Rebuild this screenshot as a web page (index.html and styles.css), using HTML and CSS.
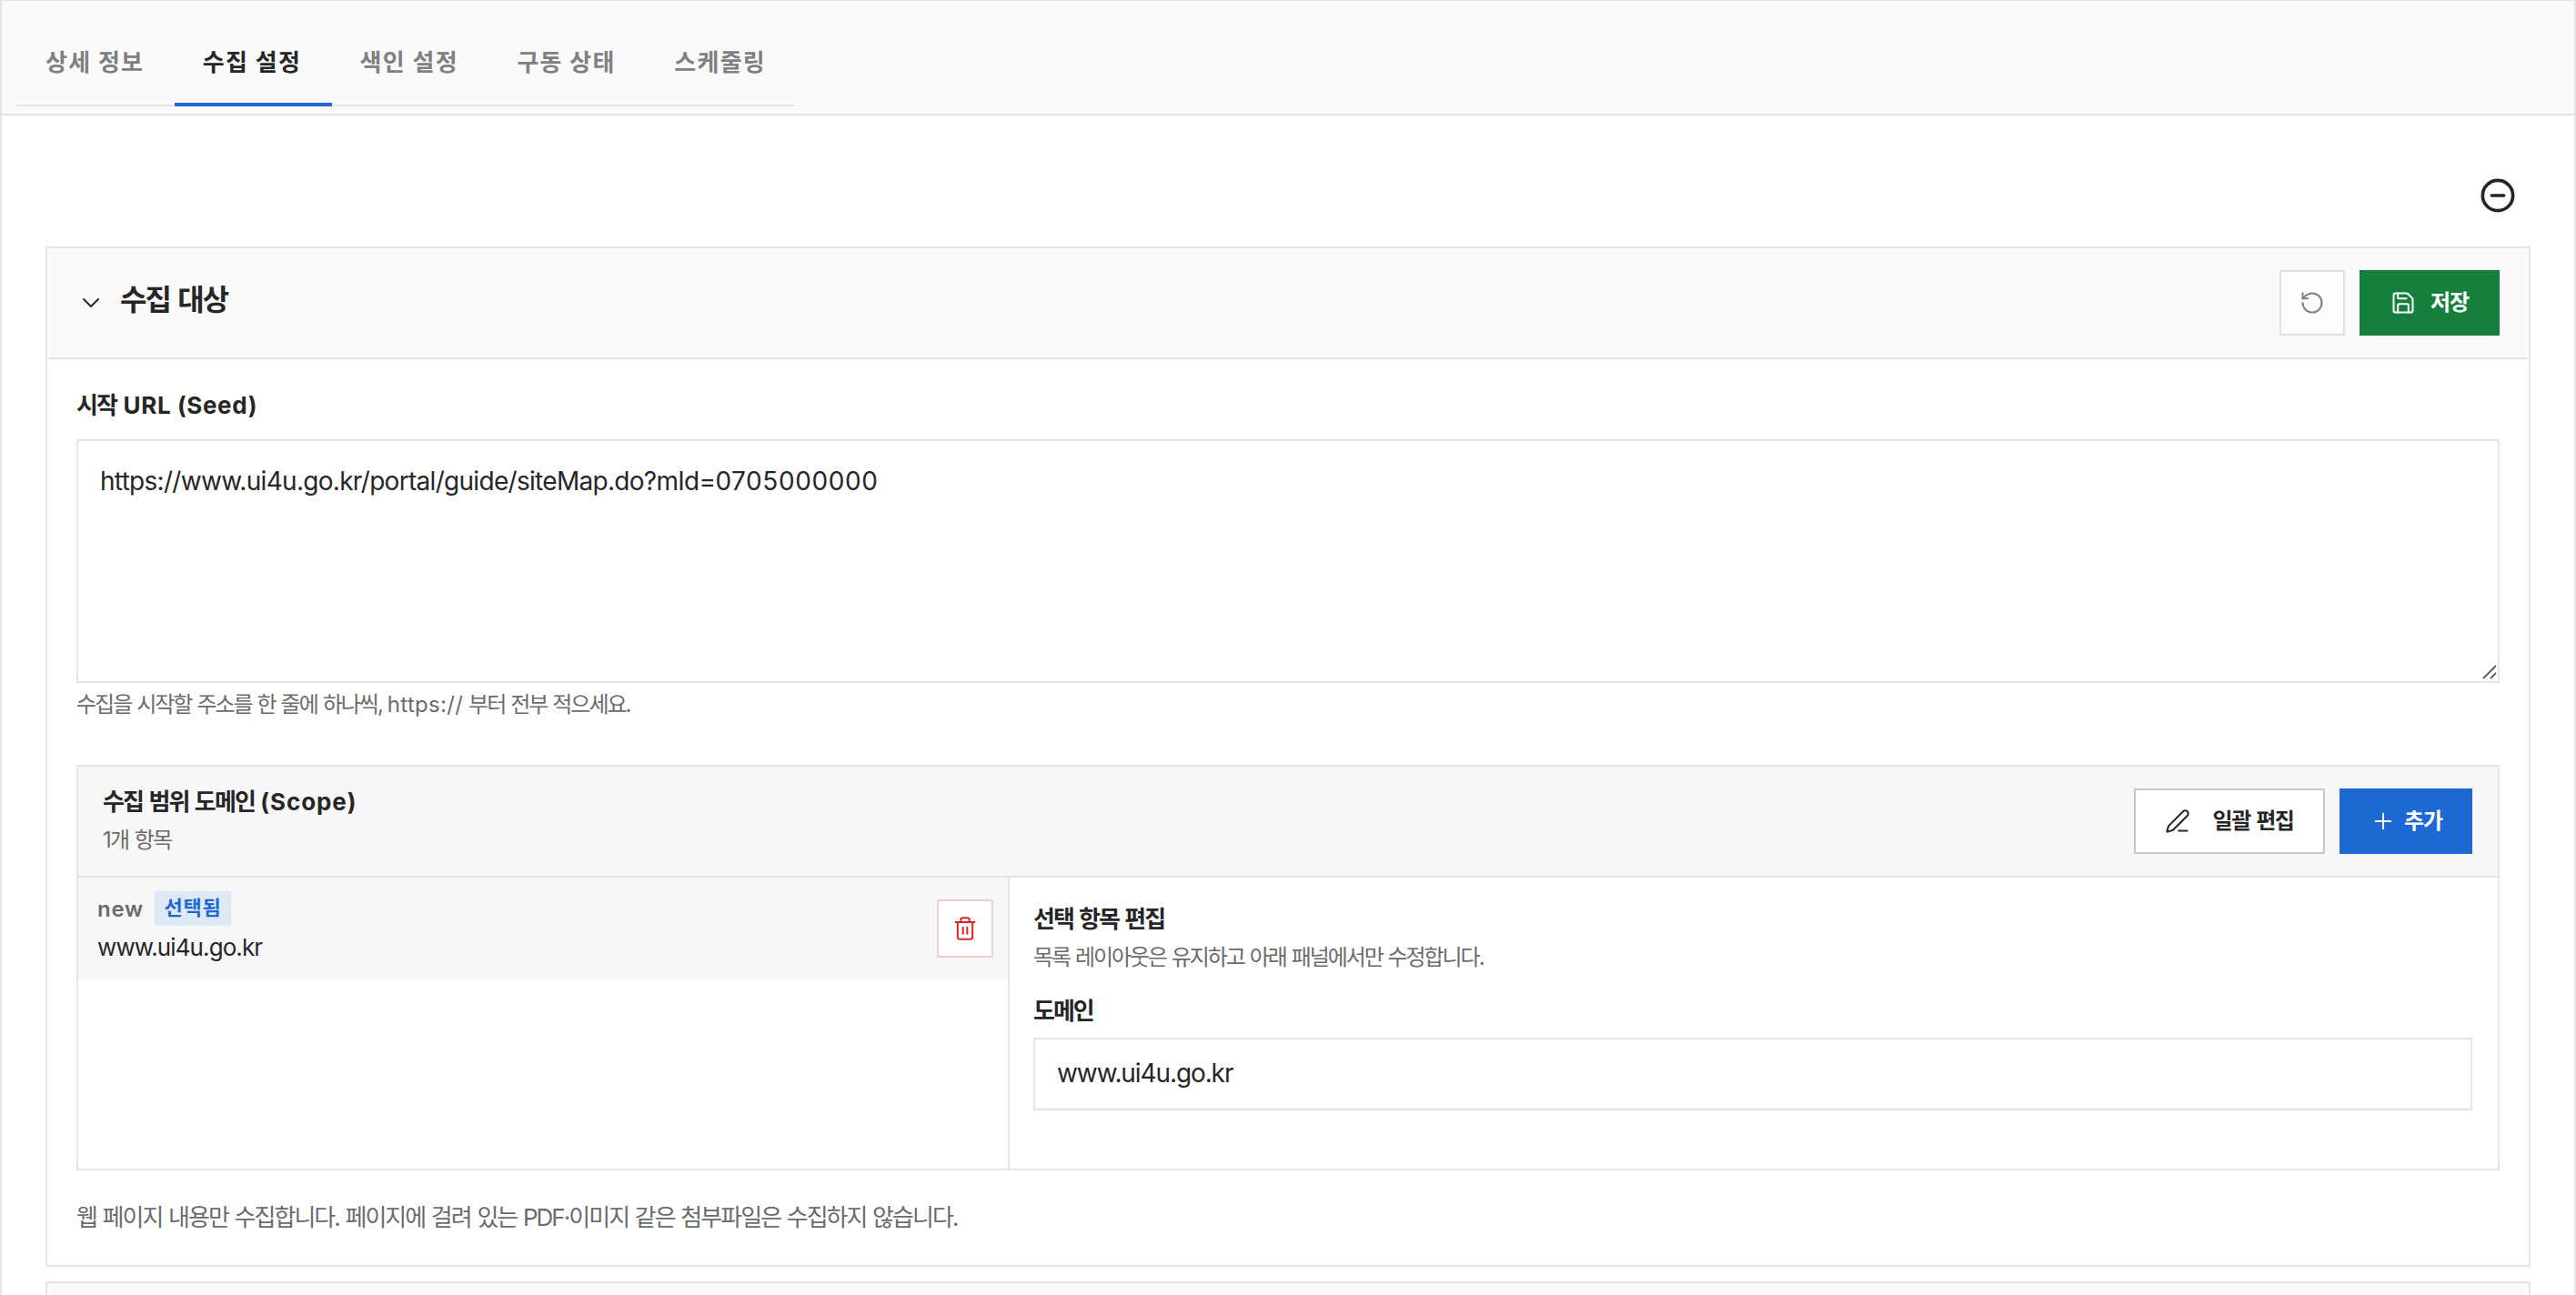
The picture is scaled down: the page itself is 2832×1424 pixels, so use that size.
FILE: index.html
```html
<!DOCTYPE html>
<html lang="ko">
<head>
<meta charset="utf-8">
<title>수집 설정</title>
<link rel="stylesheet" href="styles.css">
</head>
<body>
<div class="page">
  <header class="topbar">
    <nav class="tabs">
      <a class="tab">상세 정보</a>
      <a class="tab active">수집 설정</a>
      <a class="tab">색인 설정</a>
      <a class="tab">구동 상태</a>
      <a class="tab last">스케줄링</a>
    </nav>
  </header>
  <main class="content">
    <div class="toolbar">
      <svg class="icon collapse" viewBox="0 0 24 24"><circle cx="12" cy="12" r="10"/><path d="M8 12h8"/></svg>
    </div>
    <section class="card">
      <div class="card-head">
        <svg class="icon chevron" viewBox="0 0 24 24"><path d="m6 9 6 6 6-6"/></svg>
        <h2 class="card-title">수집 대상</h2>
        <button class="btn reset"><svg class="icon" viewBox="0 0 24 24"><path d="M3 12a9 9 0 1 0 9-9 9.75 9.75 0 0 0-6.740 2.740L3 8"/><path d="M3 3v5h5"/></svg></button>
        <button class="btn save"><svg class="icon" viewBox="0 0 24 24"><path d="M15.2 3a2 2 0 0 1 1.4.6l3.8 3.8a2 2 0 0 1 .6 1.4V19a2 2 0 0 1-2 2H5a2 2 0 0 1-2-2V5a2 2 0 0 1 2-2z"/><path d="M17 21v-7a1 1 0 0 0-1-1H8a1 1 0 0 0-1 1v7"/><path d="M7 3v4a1 1 0 0 0 1 1h7"/></svg><span>저장</span></button>
      </div>
      <div class="card-body">
        <div class="label seed-label">시작 <span class="latin">URL (Seed)</span></div>
        <div class="seed" role="textbox" aria-multiline="true">
          <span class="url">https://www.ui4u.go.kr/portal/guide/siteMap.do?mId=</span><span class="digits">0705000000</span>
          <svg class="grip" viewBox="0 0 16 16"><path d="M1 15 15 1M9 15l6-6"/></svg>
        </div>
        <p class="help seed-help">수집을 시작할 주소를 한 줄에 하나씩, <span class="latin">https://</span> 부터 전부 적으세요.</p>
        <div class="scope">
          <div class="scope-head">
            <div class="scope-titles">
              <div class="label scope-title">수집 범위 도메인 <span class="latin">(Scope)</span></div>
              <div class="help scope-count">1개 항목</div>
            </div>
            <button class="btn bulk"><svg class="icon" viewBox="0 0 24 24"><path d="M13 21h8"/><path d="M21.174 6.812a1 1 0 0 0-3.986-3.987L3.842 16.174a2 2 0 0 0-.5.83l-1.321 4.352a.5.5 0 0 0 .623.622l4.353-1.32a2 2 0 0 0 .83-.497z"/></svg><span>일괄 편집</span></button>
            <button class="btn add"><svg class="icon" viewBox="0 0 24 24"><path d="M5 12h14M12 5v14"/></svg><span>추가</span></button>
          </div>
          <div class="scope-body">
            <div class="list">
              <div class="row">
                <div class="row-text">
                  <div class="row-meta"><span class="state">new</span><span class="badge">선택됨</span></div>
                  <div class="row-domain">www.ui4u.go.kr</div>
                </div>
                <button class="btn trash"><svg class="icon" viewBox="0 0 24 24"><path d="M3 6h18"/><path d="M19 6v14a2 2 0 0 1-2 2H7a2 2 0 0 1-2-2V6"/><path d="M8 6V4a2 2 0 0 1 2-2h4a2 2 0 0 1 2 2v2"/><path d="M10 11v6M14 11v6"/></svg></button>
              </div>
            </div>
            <div class="editor">
              <div class="label editor-title">선택 항목 편집</div>
              <div class="help editor-help">목록 레이아웃은 유지하고 아래 패널에서만 수정합니다.</div>
              <label class="label domain-label">도메인</label>
              <input class="domain" value="www.ui4u.go.kr">
            </div>
          </div>
        </div>
        <p class="note">웹 페이지 내용만 수집합니다. 페이지에 걸려 있는 PDF·이미지 같은 첨부파일은 수집하지 않습니다.</p>
      </div>
    </section>
    <section class="card next"></section>
  </main>
</div>
</body>
</html>
```
FILE: styles.css
```css
* { box-sizing: border-box; margin: 0; padding: 0; }
body {
  font-family: Inter, "Noto Sans CJK KR", sans-serif;
  color: #262626;
  background: #fff;
}
.page {
  height: 1424px;
  overflow: hidden;
  border: solid #e5e5e5;
  border-width: 1px 2px 0;
}
.topbar {
  height: 126px;
  padding-left: 16px;
  background: #fafafa;
  border-bottom: 2px solid #e5e5e5;
}
.tabs {
  display: flex;
  width: 856px;
  height: 116px;
  padding-left: 1px;
  border-bottom: 2px solid #e5e5e5;
}
.tab {
  flex: none;
  width: 172.8px;
  height: 116px;
  padding-left: 31px;
  border-bottom: 4px solid transparent;
  color: #808080;
  font-size: 26px;
  font-weight: 700;
  line-height: 135px;
  letter-spacing: 1.3px;
  white-space: nowrap;
}
.tab.last { width: 163px; }
.tab.active { color: #262626; border-color: #1c69d4; }
.content { padding: 0 48px; }
.toolbar {
  display: flex;
  justify-content: flex-end;
  height: 144px;
  padding: 68px 16px 0 0;
}
.icon {
  display: block;
  flex: none;
  width: 28px;
  height: 28px;
  fill: none;
  stroke: currentColor;
  stroke-width: 1.75;
  stroke-linecap: round;
  stroke-linejoin: round;
}
.collapse { width: 40px; height: 40px; stroke-width: 2.2; }
.card { border: 2px solid #e5e5e5; background: #fff; }
.card-head {
  display: flex;
  align-items: center;
  height: 122px;
  padding: 0 32px;
  background: #fafafa;
  border-bottom: 2px solid #e5e5e5;
}
.chevron { width: 32px; height: 32px; stroke-width: 1.5; }
.card-title {
  margin: -6px auto 0 16px;
  font-size: 32px;
  font-weight: 700;
  line-height: 44px;
  letter-spacing: -1.9px;
  word-spacing: 2.5px;
}
.btn {
  display: flex;
  align-items: center;
  justify-content: center;
  flex: none;
  height: 72px;
  border: 2px solid #e0e0e0;
  background: #fdfdfd;
  font: 700 24px/36px Inter, "Noto Sans CJK KR", sans-serif;
  letter-spacing: -1px;
  color: #262626;
}
.reset { width: 72px; color: #808080; margin-right: 16px; }
.save { width: 154px; gap: 16px; color: #fff; background: #15803d; border-color: #15803d; }
.card-body { padding: 32px 32px 0; height: 996px; }
.label {
  display: block;
  font-size: 26px;
  font-weight: 700;
  line-height: 36px;
  letter-spacing: -1.8px;
  word-spacing: 1.8px;
  white-space: nowrap;
}
.label .latin { letter-spacing: .9px; }
.seed-label { height: 56px; line-height: 37px; word-spacing: 3px; }
.seed-label .latin { letter-spacing: .6px; word-spacing: 0; }
.seed {
  position: relative;
  height: 268px;
  padding: 24px;
  border: 2px solid #e5e5e5;
  background: #fff;
  font-size: 28px;
  line-height: 40px;
}
.url { letter-spacing: -.7px; }
.digits { letter-spacing: .6px; }
.grip {
  position: absolute;
  right: 1px;
  bottom: 2px;
  width: 16px;
  height: 16px;
  fill: none;
  stroke: #5c5c5c;
  stroke-width: 1.8;
}
.help {
  font-size: 24px;
  color: #6b6b6b;
  line-height: 36px;
  letter-spacing: -2px;
  word-spacing: 1.2px;
  white-space: nowrap;
}
.help .latin { letter-spacing: .3px; }
.seed-help { margin-top: 6px; }
.scope { margin-top: 48px; height: 446px; border: 2px solid #e5e5e5; }
.scope-head {
  display: flex;
  align-items: center;
  height: 122px;
  padding: 0 28px 0 27px;
  background: #f7f7f7;
  border-bottom: 2px solid #e5e5e5;
}
.scope-titles { display: flex; flex-direction: column; flex: 1; gap: 6px; }
.scope-count { letter-spacing: -1.7px; }
.bulk { width: 210px; gap: 24px; padding-left: 0; margin-right: 16px; background: #fff; border-color: #c8c8c8; letter-spacing: -1.4px; word-spacing: 2px; }
.add { width: 146px; gap: 9px; padding-left: 1px; color: #fff; background: #1c69d4; border-color: #1c69d4; }
.scope-body { display: grid; grid-template-columns: 1024px 1fr; height: 320px; }
.list { border-right: 2px solid #e5e5e5; }
.row {
  display: flex;
  align-items: center;
  justify-content: space-between;
  height: 112px;
  padding: 0 16px 0 21px;
  background: #f7f7f7;
}
.row-meta { display: flex; align-items: center; height: 38px; }
.state { width: 63px; color: #6b6b6b; font-size: 24px; font-weight: 600; letter-spacing: .7px; }
.badge {
  width: 84px;
  height: 38px;
  background: #dfe8f5;
  color: #1c69d4;
  font-size: 22px;
  font-weight: 700;
  line-height: 36px;
  letter-spacing: .7px;
  text-align: center;
}
.row-domain { font-size: 26px; line-height: 40px; margin-top: 4px; letter-spacing: -.9px; }
.trash { width: 62px; height: 64px; color: #dc2626; background: #fff; border-color: #f8cccc; }
.editor { padding: 28px 28px 0 26px; }
.editor-title { letter-spacing: -1.9px; }
.editor-help { margin-top: 6px; letter-spacing: -2.07px; }
.domain-label { margin-top: 23px; letter-spacing: -2px; }
.domain {
  display: block;
  width: 100%;
  height: 80px;
  margin-top: 11px;
  padding: 0 24px 2px;
  border: 2px solid #e5e5e5;
  outline: none;
  background: #fff;
  color: #262626;
  font: 400 28px/40px Inter, "Noto Sans CJK KR", sans-serif;
  letter-spacing: -1.1px;
}
.note { margin-top: 32px; font-size: 26px; line-height: 40px; letter-spacing: -1.95px; word-spacing: 1.2px; color: #6b6b6b; white-space: nowrap; }
.next { margin-top: 16px; height: 60px; background: #fafafa; }
```
